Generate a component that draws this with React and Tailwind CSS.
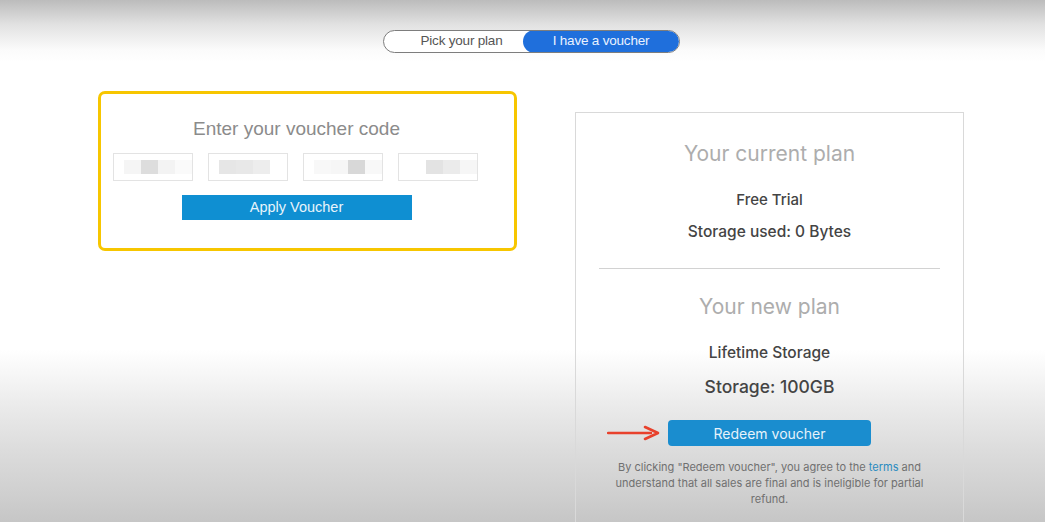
import React from "react";

function Blurred({ blocks }) {
  return (
    <div className="flex h-[28px] w-[80px] items-center border border-[#e3e3e3] bg-white pl-[10px]">
      <div className="flex h-[14px] blur-[0.6px]">
        {blocks.map((c, i) => (
          <div key={i} className="h-[14px] w-[17px]" style={{ background: c }} />
        ))}
      </div>
    </div>
  );
}

export default function App() {
  return (
    <div className="relative h-[522px] w-[1045px] overflow-hidden bg-[linear-gradient(to_bottom,#bcbcbc_0px,#e2e2e2_25px,#fbfbfb_50px,#ffffff_62px,#ffffff_350px,#f8f8f8_370px,#ebebeb_405px,#dcdcdc_450px,#cfcfcf_495px,#c6c6c6_522px)] font-['Liberation_Sans',Arial,sans-serif]">
      {/* toggle */}
      <div className="flex justify-center pl-[18px] pt-[30px]">
        <div className="flex h-[23px] w-[297px] overflow-hidden rounded-full border-[1.5px] border-[#7d7d7d] bg-white">
          <div className="flex w-[139px] items-center justify-center pl-[16px] text-[13.5px] tracking-[-0.2px] text-[#555]">
            Pick your plan
          </div>
          <div className="-my-[1px] flex flex-1 items-center justify-center rounded-full bg-[#1f6fdc] text-[13.5px] tracking-[-0.2px] text-[#eaf2ff]">
            I have a voucher
          </div>
        </div>
      </div>

      <div className="flex pt-[38px]">
        {/* left voucher box */}
        <div className="ml-[98px] h-[160px] w-[419px] rounded-[7px] border-[3px] border-[#f7c600]">
          <div className="flex flex-col items-center pr-[22px]">
            <div className="mt-[23px] text-[19px] leading-[24px] text-[#8b8b8b]">
              Enter your voucher code
            </div>
            <div className="mt-[12px] flex w-full gap-[15px] pl-[12px]">
              <Blurred blocks={["#f5f5f5", "#dddddd", "#f3f3f3", "#fafafa"]} />
              <Blurred blocks={["#e6e6e6", "#e8e8e8", "#ededed", "#ffffff"]} />
              <Blurred blocks={["#f8f8f8", "#f6f6f6", "#d8d8d8", "#f8f8f8"]} />
              <Blurred blocks={["#ffffff", "#e3e3e3", "#ebebeb", "#f6f6f6"]} />
            </div>
            <div className="mt-[14px] flex h-[25px] w-[230px] items-center justify-center bg-[#0f8fd2] text-[14.5px] text-[#e8f4fb]">
              Apply Voucher
            </div>
          </div>
        </div>

        {/* right plan card */}
        <div className="ml-[58px] mt-[21px] h-[420px] w-[389px] border border-[#d9d9d9] font-['Inter',sans-serif]">
          <div className="flex flex-col items-center">
            <div className="mt-[28px] text-[21px] leading-[26px] text-[#adadad]">Your current plan</div>
            <div className="mt-[23px] text-[15px] font-medium leading-[20px] text-[#444]">Free Trial</div>
            <div className="mt-[12px] text-[15.5px] font-medium leading-[20px] text-[#444]">Storage used: 0 Bytes</div>
          </div>
          <div className="mx-[23px] mt-[26px] h-[1px] bg-[#d2d2d2]" />
          <div className="flex flex-col items-center">
            <div className="mt-[25px] text-[21px] leading-[26px] text-[#adadad]">Your new plan</div>
            <div className="mt-[23px] text-[15.5px] font-medium leading-[20px] text-[#444]">Lifetime Storage</div>
            <div className="mt-[12px] text-[17.5px] font-medium leading-[24px] text-[#444]">Storage: 100GB</div>
            <div className="relative mt-[21px] flex h-[26px] w-[203px] items-center justify-center rounded-[4px] bg-[#1a8dcf] text-[14px] text-[#e6f2fa]">
              Redeem voucher
              <svg className="absolute left-[-61px] top-[5px]" width="54" height="16" viewBox="0 0 54 16">
                <path d="M1 8 H44" stroke="#e8412c" strokeWidth="2.4" strokeLinecap="round" />
                <path d="M38 2 L51 8 L38 14" fill="none" stroke="#e8412c" strokeWidth="2.6" strokeLinejoin="round" strokeLinecap="round" />
              </svg>
            </div>
            <p className="mt-[13px] w-[330px] text-center text-[11px] leading-[16px] text-[#707070]">
              By clicking "Redeem voucher", you agree to the <span className="text-[#2a8bc0]">terms</span> and understand that all sales are final and is ineligible for partial refund.
            </p>
          </div>
        </div>
      </div>
    </div>
  );
}
